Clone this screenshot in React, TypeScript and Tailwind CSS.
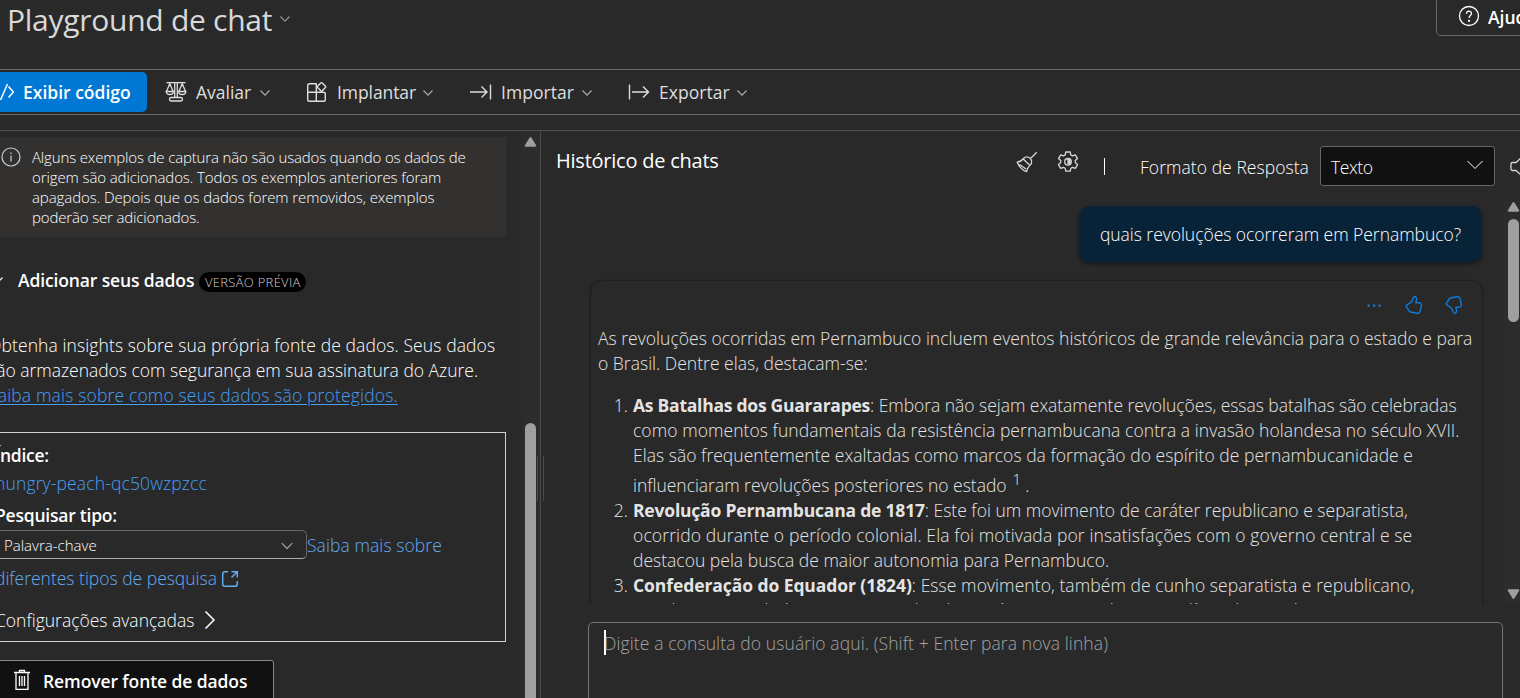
import type { ReactNode } from "react";

type IconProps = { className?: string };

function Chevron({ className }: IconProps) {
  return (
    <svg viewBox="0 0 12 12" className={className} fill="none" stroke="currentColor" strokeWidth="1.1">
      <path d="M1.5 3.5 6 8.2l4.5-4.7" />
    </svg>
  );
}

function ScaleIcon() {
  return (
    <svg viewBox="0 0 22 22" className="h-[22px] w-[22px] shrink-0" fill="none" stroke="currentColor" strokeWidth="1.3">
      <path d="M1.5 1.700h19M9.700 2v14M12.300 2v14M4.800 2.500l-3.300 8M4.800 2.500l3.300 8M17.200 2.500l-3.300 8M17.200 2.500l3.300 8" />
      <path d="M1.200 10.500h7.200c0 2-1.600 3-3.600 3s-3.600-1-3.600-3ZM13.600 10.500h7.200c0 2-1.600 3-3.600 3s-3.600-1-3.600-3Z" />
      <rect x="4.500" y="16.500" width="13" height="3.500" rx="1.700" />
    </svg>
  );
}

function AppsIcon() {
  return (
    <svg viewBox="0 0 22 22" className="h-[22px] w-[22px] shrink-0" fill="none" stroke="currentColor" strokeWidth="1.400" strokeLinejoin="round">
      <path d="M10.300 11.200V2.700H3.500c-1 0-1.800.8-1.800 1.800v14c0 1 .8 1.800 1.800 1.800h14c1 0 1.800-.8 1.800-1.800v-5.500c0-1-.8-1.800-1.800-1.800H1.700M10.300 11.200v9" />
      <rect x="12.200" y="2.600" width="6.600" height="6.600" rx="1" transform="rotate(45 15.500 5.900)" />
    </svg>
  );
}

function ImportIcon() {
  return (
    <svg viewBox="0 0 22 18" className="h-[18px] w-[22px] shrink-0" fill="none" stroke="currentColor" strokeWidth="1.400">
      <path d="M0 9h17M11.500 3.500 17 9l-5.500 5.500M20.500 1.500v15" />
    </svg>
  );
}

function ExportIcon() {
  return (
    <svg viewBox="0 0 22 18" className="h-[18px] w-[22px] shrink-0" fill="none" stroke="currentColor" strokeWidth="1.400">
      <path d="M1.500 1.500v15M4 9h16.500M15 3.500 20.500 9 15 14.500" />
    </svg>
  );
}

function BroomIcon() {
  return (
    <svg viewBox="0 0 22 22" className="h-[22px] w-[22px] shrink-0" fill="none" stroke="currentColor" strokeWidth="1.300" strokeLinejoin="round">
      <path d="M20.800 1.200 15 7M1.200 11.200c2.600-.2 4.600-1.400 6.300-3.700 1.800-2.200 4.800-2 6.600-.200s2.200 4.800.2 6.600c-2 1.900-3.300 3.700-3.800 6.800C6.500 19 3 15.500 1.200 11.200ZM7.300 8l6.900 6.700M3.500 13.500l6.500 4.500" />
    </svg>
  );
}

function GearIcon() {
  return (
    <svg viewBox="0 0 22 22" className="h-[22px] w-[22px] shrink-0" fill="none" stroke="currentColor" strokeWidth="1.300" strokeLinejoin="round">
      <path d="M8.800 1h4.400l.6 2.900 1.700 1 2.800-1 2.200 3.700-2.200 2v2l2.200 2-2.200 3.700-2.800-1-1.700 1-.6 2.900H8.800l-.6-2.900-1.700-1-2.800 1-2.200-3.700 2.200-2v-2l-2.200-2 2.200-3.700 2.800 1 1.700-1Z" />
      <circle cx="11" cy="10.800" r="3.300" />
      <path d="M11 8.500a2.300 2.300 0 0 1 0 4.600Z" fill="currentColor" />
    </svg>
  );
}

function ThumbIcon({ className }: IconProps) {
  return (
    <svg viewBox="0 0 18 20" className={className} fill="none" stroke="currentColor" strokeWidth="1.400" strokeLinejoin="round">
      <path d="M9.700 1.500c1.700.2 2.200 1.800 1.800 3.400l-.7 2.900h3.400c1.500 0 2.500 1.300 2.200 2.700l-1.200 5.400c-.4 1.800-1.800 2.800-3.600 2.400l-6-1.300c-1-.2-1.600-.8-2-1.700l-.4-.9C2.700 13.300 1.800 12.900 1.500 12c-.3-1.200.5-2.400 1.600-2.800 1.700-.7 2.900-1.400 3.800-3 .8-1.400 1.300-4.800 2.800-4.700Z" />
    </svg>
  );
}

function Triangle({ className }: IconProps) {
  return (
    <svg viewBox="0 0 12 10" className={className} fill="#9f9f9f">
      <path d="M5 .8a1.200 1.200 0 0 1 2 0l4.600 7.400c.5.800 0 1.500-.8 1.500H1.200c-.8 0-1.300-.7-.8-1.500Z" />
    </svg>
  );
}

function ToolbarItem({ icon, label, className }: { icon: ReactNode; label: string; className: string }) {
  return (
    <button className={`flex h-10 shrink-0 items-center font-medium text-[#dedede] ${className}`}>
      {icon}
      <span className="mt-px ml-[9px] flex-1 text-left">{label}</span>
      <Chevron className="mt-0.5 h-3 w-3 text-[#b0b0b0]" />
    </button>
  );
}

function Header() {
  return (
    <header className="flex h-[69px] shrink-0 items-start justify-between overflow-hidden">
      <div className="-mt-px flex items-center pl-[7px]">
        <h1 className="h-10 text-[30px] leading-[42px] font-normal tracking-[-0.27px] text-[#d9d9d9]">Playground de chat</h1>
        <Chevron className="ml-[7px] h-3 w-3 text-[#999]" />
      </div>
      <button className="-mt-1 -mr-14 flex h-10 w-[140px] shrink-0 items-center rounded-[5px] border border-[#666] pl-[21px] font-semibold text-white">
        <svg viewBox="0 0 22 22" className="h-[22px] w-[22px] shrink-0" fill="none" stroke="currentColor" strokeWidth="1.300">
          <circle cx="11" cy="11" r="9.500" />
          <path d="M8.500 8.700c0-3.600 5-3.400 5-.3 0 2-2.500 2.200-2.500 4.600" />
          <circle cx="11" cy="15.800" r=".5" fill="currentColor" />
        </svg>
        <span className="mt-0.5 ml-2">Ajuda</span>
      </button>
    </header>
  );
}

function Toolbar() {
  return (
    <nav className="flex h-[46px] shrink-0 items-center border-y border-[#666]">
      <button className="flex h-10 w-[147px] shrink-0 items-center rounded-r-[5px] bg-[#0078d4] font-semibold text-white">
        <svg viewBox="0 0 22 18" className="-ml-2 h-[18px] w-[22px] shrink-0" fill="none" stroke="currentColor" strokeWidth="1.500">
          <path d="M15.500 1 8.500 17M6 3.500 1 9l5 5.500M16.500 3.500 21.500 9l-5 5.500" />
        </svg>
        <span className="mt-px ml-[9px]">Exibir código</span>
      </button>
      <ToolbarItem icon={<ScaleIcon />} label="Avaliar" className="ml-[18px] w-[106px]" />
      <ToolbarItem icon={<AppsIcon />} label="Implantar" className="ml-[35px] w-[128px] tracking-[-0.08px]" />
      <ToolbarItem icon={<ImportIcon />} label="Importar" className="ml-9 w-[123px] tracking-[0.05px]" />
      <ToolbarItem icon={<ExportIcon />} label="Exportar" className="ml-[35px] w-[120px] tracking-[0.05px]" />
    </nav>
  );
}

function DataPanel() {
  return (
    <aside className="flex w-[540px] shrink-0 overflow-hidden">
      <div className="w-[521px] shrink-0">
        <div className="mt-1.5 flex h-[100px] w-[506px] bg-[#323130] pt-2.5 pl-px">
          <svg viewBox="0 0 20 20" className="h-5 w-5 shrink-0" fill="none" stroke="#d0d0d0" strokeWidth="1.200">
            <circle cx="10" cy="10" r="9" />
            <path d="M10 8.500v6M10 5.500v1.400" />
          </svg>
          <p className="ml-[11px] text-[15px] leading-5 tracking-[-0.15px] whitespace-nowrap text-white">
            Alguns exemplos de captura não são usados quando os dados de
            <br />
            <span className="tracking-[-0.1px]">origem são adicionados. Todos os exemplos anteriores foram</span>
            <br />
            <span className="tracking-[-0.08px]">apagados. Depois que os dados forem removidos, exemplos</span>
            <br />
            poderão ser adicionados.
          </p>
        </div>

        <div className="mt-[31px] flex h-6 items-center">
          <Chevron className="-ml-2 h-3 w-3 text-white" />
          <h2 className="ml-3.5 font-semibold tracking-[-0.13px] text-white">Adicionar seus dados</h2>
          <span className="mt-1 ml-[5px] h-5 w-[107px] rounded-full bg-black text-center text-[13px] leading-5 tracking-[0.3px] text-[#d0d0d0]">
            VERSÃO PRÉVIA
          </span>
        </div>

        <p className="mt-[41px] -ml-3 tracking-[0.1px] whitespace-nowrap text-white">
          Obtenha insights sobre sua própria fonte de dados. Seus dados
          <br />
          <span className="tracking-[-0.01px]">são armazenados com segurança em sua assinatura do Azure.</span>
          <br />
          <a className="tracking-[0.16px] text-[#479ef5] underline underline-offset-2">Saiba mais sobre como seus dados são protegidos.</a>
        </p>

        <section className="mt-6 -ml-[22px] h-[210px] w-[528px] border border-[#d1d1d1] pt-2.5 pl-4 whitespace-nowrap">
          <div className="font-semibold tracking-[-0.3px] text-white">Índice:</div>
          <div className="mt-[3px] tracking-[0.14px] text-[#479ef5]">hungry-peach-qc50wzpzcc</div>
          <div className="mt-[7px] font-semibold tracking-[-0.22px] text-white">Pesquisar tipo:</div>
          <div className="mt-0.5 flex h-[29px] items-center">
            <div className="flex h-[29px] w-[312px] items-center justify-between rounded-[5px] border border-[#666] border-b-[#adadad] pt-0.5 pr-3 pl-2 text-[15px] text-white">
              Palavra-chave
              <Chevron className="h-3.5 w-3.5 text-[#999]" />
            </div>
            <a className="pt-0.5 tracking-[0.08px] text-[#62abf5]">Saiba mais sobre</a>
          </div>
          <div className="mt-[7px] flex h-[25px] items-center text-[#62abf5]">
            <a className="-mt-px tracking-[-0.01px]">diferentes tipos de pesquisa</a>
            <svg viewBox="0 0 18 18" className="ml-1 h-[18px] w-[18px]" fill="none" stroke="currentColor" strokeWidth="1.500">
              <path d="M7 1.700H4A2.300 2.300 0 0 0 1.700 4v10A2.300 2.300 0 0 0 4 16.300h10a2.300 2.300 0 0 0 2.300-2.300v-3M10.500 1.700h5.800v5.800M16 2l-5.500 5.500" />
            </svg>
          </div>
          <div className="mt-4 flex h-[25px] items-center text-white">
            <span className="pt-px">Configurações avançadas</span>
            <svg viewBox="0 0 12 20" className="ml-2.5 h-5 w-3" fill="none" stroke="currentColor" strokeWidth="1.500">
              <path d="M1.500 1.500 10 10l-8.500 8.500" />
            </svg>
          </div>
        </section>

        <button className="mt-[18px] -ml-3 flex h-[42px] w-[286px] items-center rounded-[3px] border border-[#8a8a8a] bg-[#111] pl-6 font-semibold tracking-[-0.1px] text-white">
          <svg viewBox="0 0 18 22" className="-mt-0.5 h-[22px] w-[18px] shrink-0" fill="none" stroke="currentColor" strokeWidth="1.300">
            <path d="M1 3.500h16M6.500 3.500V1.500h5v2M3 3.500v16.800h12V3.500M6.500 7v10M9 7v10M11.500 7v10" />
          </svg>
          <span className="mt-px ml-3">Remover fonte de dados</span>
        </button>
      </div>
      <div className="flex w-[19px] shrink-0 flex-col items-center bg-[#2c2c2c] pt-1.5">
        <Triangle className="h-2.5 w-[13px] shrink-0" />
        <div className="mt-[276px] h-[300px] w-[11px] shrink-0 rounded-full bg-[#9f9f9f]" />
      </div>
    </aside>
  );
}

function ChatHeader() {
  return (
    <div className="flex h-[70px] shrink-0 text-white">
      <h2 className="mt-4 ml-[13px] w-[460px] shrink-0 text-[20px] leading-[27px] font-medium tracking-[-0.23px]">Histórico de chats</h2>
      <div className="mt-5 flex h-[22px] shrink-0 gap-[19px] text-[#d6d6d6]">
        <BroomIcon />
        <GearIcon />
      </div>
      <span className="mt-[27px] ml-[25px] h-[17px] w-px shrink-0 bg-white" />
      <span className="mt-6 ml-[35px] w-[180px] shrink-0 tracking-[0.05px]">Formato de Resposta</span>
      <div className="mt-[15px] flex h-10 w-[175px] shrink-0 items-center justify-between rounded-[3px] border border-[#666] bg-[#111] pr-2.5 pl-2.5">
        <span className="mt-[3px] tracking-[-0.4px]">Texto</span>
        <svg viewBox="0 0 18 10" className="-mt-0.5 h-2.5 w-[18px]" fill="none" stroke="currentColor" strokeWidth="1">
          <path d="M1.500 1 9 8.500 16.500 1" />
        </svg>
      </div>
      <svg viewBox="0 0 22 22" className="mt-[25px] ml-[15px] h-[22px] w-[22px] shrink-0" fill="none" stroke="#d6d6d6" strokeWidth="1.300">
        <path d="M11.500 1.500v18l-5.500-5H2.500c-.8 0-1.500-.5-1.500-1.500V8c0-.9.700-1.500 1.500-1.500H6Z" />
      </svg>
    </div>
  );
}

function Item({ n, children }: { n: number; children: ReactNode }) {
  return (
    <li className="flex">
      <span className="w-[30px] text-right">{n}.</span>
      <div className="ml-[5px]">{children}</div>
    </li>
  );
}

function Messages() {
  return (
    <div className="flex h-[403px] shrink-0 overflow-hidden">
      <div className="ml-11 w-[895px] shrink-0">
        <div className="mt-[5px] ml-[492px] flex h-14 w-[403px] items-center justify-center rounded-[10px] bg-[#082338] pt-px tracking-[-0.04px] whitespace-nowrap text-white shadow-[0_2px_4px_rgba(0,0,0,0.4)]">
          quais revoluções ocorreram em Pernambuco?
        </div>
        <article className="mt-[19px] ml-1 h-[400px] w-[891px] rounded-[10px] pl-[7px] whitespace-nowrap text-[#e4e4e4] shadow-[0_0_2px_rgba(0,0,0,0.6),0_1px_3px_rgba(0,0,0,0.3)]">
          <div className="flex h-11 items-center justify-end gap-[22px] pt-1 pr-[19px] text-[#0f7bd6]">
            <svg viewBox="0 0 14 3" className="h-[3px] w-3.5" fill="currentColor">
              <path d="M.5.500h2.300v2.300H.5zM5.900.500h2.300v2.300H5.900zM11.300.500h2.300v2.300h-2.300z" />
            </svg>
            <ThumbIcon className="ml-0.5 h-5 w-[18px]" />
            <ThumbIcon className="h-5 w-[18px] -scale-y-100" />
          </div>
          <p className="pt-px tracking-[0.02px]">
            As revoluções ocorridas em Pernambuco incluem eventos históricos de grande relevância para o estado e para
            <br />o Brasil. Dentre elas, destacam-se:
          </p>
          <ol className="mt-[17px] tracking-[0.05px]">
            <Item n={1}>
              <b className="font-bold tracking-[-0.25px]">As Batalhas dos Guararapes</b>
              <span className="tracking-[-0.04px]">: Embora não sejam exatamente revoluções, essas batalhas são celebradas</span>
              <br />
              <span className="tracking-[0.06px]">como momentos fundamentais da resistência pernambucana contra a invasão holandesa no século XVII.</span>
              <br />
              <span className="tracking-[0.03px]">Elas são frequentemente exaltadas como marcos da formação do espírito de pernambucanidade e</span>
              <div className="flex h-[30px] items-end">
                <span className="tracking-[-0.02px]">influenciaram revoluções posteriores no estado</span>
                <span className="mb-[6px] ml-1.5 text-[15px]">1</span>
                <span className="ml-1">.</span>
              </div>
            </Item>
            <Item n={2}>
              <b className="font-bold tracking-[-0.2px]">Revolução Pernambucana de 1817</b>
              <span className="tracking-[0.01px]">: Este foi um movimento de caráter republicano e separatista,</span>
              <br />
              <span className="tracking-[0.12px]">ocorrido durante o período colonial. Ela foi motivada por insatisfações com o governo central e se</span>
              <br />
              <span className="tracking-[0.01px]">destacou pela busca de maior autonomia para Pernambuco.</span>
            </Item>
            <Item n={3}>
              <b className="font-bold tracking-[-0.08px]">Confederação do Equador (1824)</b>
              <span className="tracking-[0.07px]">: Esse movimento, também de cunho separatista e republicano,</span>
              <br />
              envolveu uma rebelião contra o poder do Império e a centralização política do Brasil
            </Item>
          </ol>
        </article>
      </div>
      <div className="ml-[22px] flex w-[17px] shrink-0 flex-col items-center bg-[#2c2c2c] pb-[5px] pl-0.5">
        <Triangle className="mt-px h-2.5 w-[13px]" />
        <div className="mt-[7px] h-[103px] w-[11px] rounded-full bg-[#9f9f9f]" />
        <Triangle className="mt-auto h-2.5 w-[13px] rotate-180" />
      </div>
    </div>
  );
}

function Composer() {
  return (
    <div className="mt-[18px] ml-[45px] flex h-[120px] w-[915px] shrink-0 rounded-[5px] border border-[#757575] pt-[7px] pl-[15px]">
      <span className="h-[25px] w-0.5 shrink-0 bg-white" />
      <span className="-ml-0.5 pt-px tracking-[0.11px] whitespace-nowrap text-[#a3a3a3]">
        Digite a consulta do usuário aqui. (Shift + Enter para nova linha)
      </span>
    </div>
  );
}

export default function App() {
  return (
    <div className="flex h-[698px] w-[1520px] flex-col overflow-hidden bg-[#292929] font-['Open_Sans','Noto_Sans',sans-serif] text-[17.5px] leading-[25px] font-light">
      <Header />
      <Toolbar />
      <main className="mt-[15px] flex h-[568px] shrink-0 border-t border-[#525252]">
        <DataPanel />
        <div className="-ml-[3px] flex w-[7px] shrink-0 flex-col items-center">
          <span className="h-[325px] w-px bg-[#4a4a4a]" />
          <span className="flex h-[45px] w-[7px] justify-between">
            <i className="w-px bg-[#4a4a4a]" />
            <i className="w-px bg-[#4a4a4a]" />
            <i className="w-px bg-[#4a4a4a]" />
          </span>
          <span className="w-px flex-1 bg-[#4a4a4a]" />
        </div>
        <section className="-ml-[1px] flex w-[977px] shrink-0 flex-col overflow-hidden">
          <ChatHeader />
          <Messages />
          <Composer />
        </section>
      </main>
    </div>
  );
}
